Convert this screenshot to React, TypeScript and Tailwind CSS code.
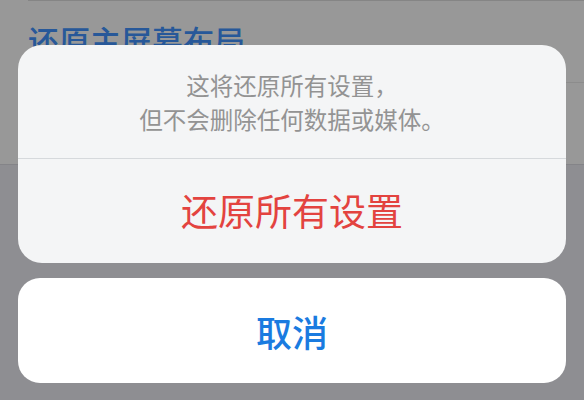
const cjk = "font-['Noto_Sans_CJK_SC','Noto_Sans',sans-serif]";

export default function App() {
  return (
    <div className={`relative w-[584px] h-[400px] overflow-hidden bg-[#8e8e92] ${cjk}`}>
      {/* settings list behind the sheet */}
      <div className="bg-[#989898]">
        <div className="ml-[28px] h-[82px] border-t border-[#858585] pt-[19px] text-[31px] font-medium leading-[40px] text-[#275899]">
          还原主屏幕布局
        </div>
        <div className="ml-[28px] h-[82px] border-t border-[#8c8c8c]" />
      </div>
      <div className="border-t border-[#848488]" />

      {/* action sheet */}
      <div className="absolute inset-0 flex flex-col justify-end gap-[15px] px-[18px] pb-[17px]">
        <div className="overflow-hidden rounded-[24px] bg-[#f4f5f6]">
          <div className="flex h-[113px] flex-col items-center justify-center text-center text-[23.5px] leading-[34px] text-[#939393]">
            <p>这将还原所有设置，</p>
            <p>但不会删除任何数据或媒体。</p>
          </div>
          <div className="border-t border-[#d6d9dc]" />
          <button className="flex h-[104px] w-full items-center justify-center text-[37px] text-[#e3433f]">
            还原所有设置
          </button>
        </div>
        <button className="flex h-[105px] w-full items-center justify-center rounded-[22px] bg-white text-[36px] font-medium text-[#1a7be0]">
          取消
        </button>
      </div>
    </div>
  );
}
